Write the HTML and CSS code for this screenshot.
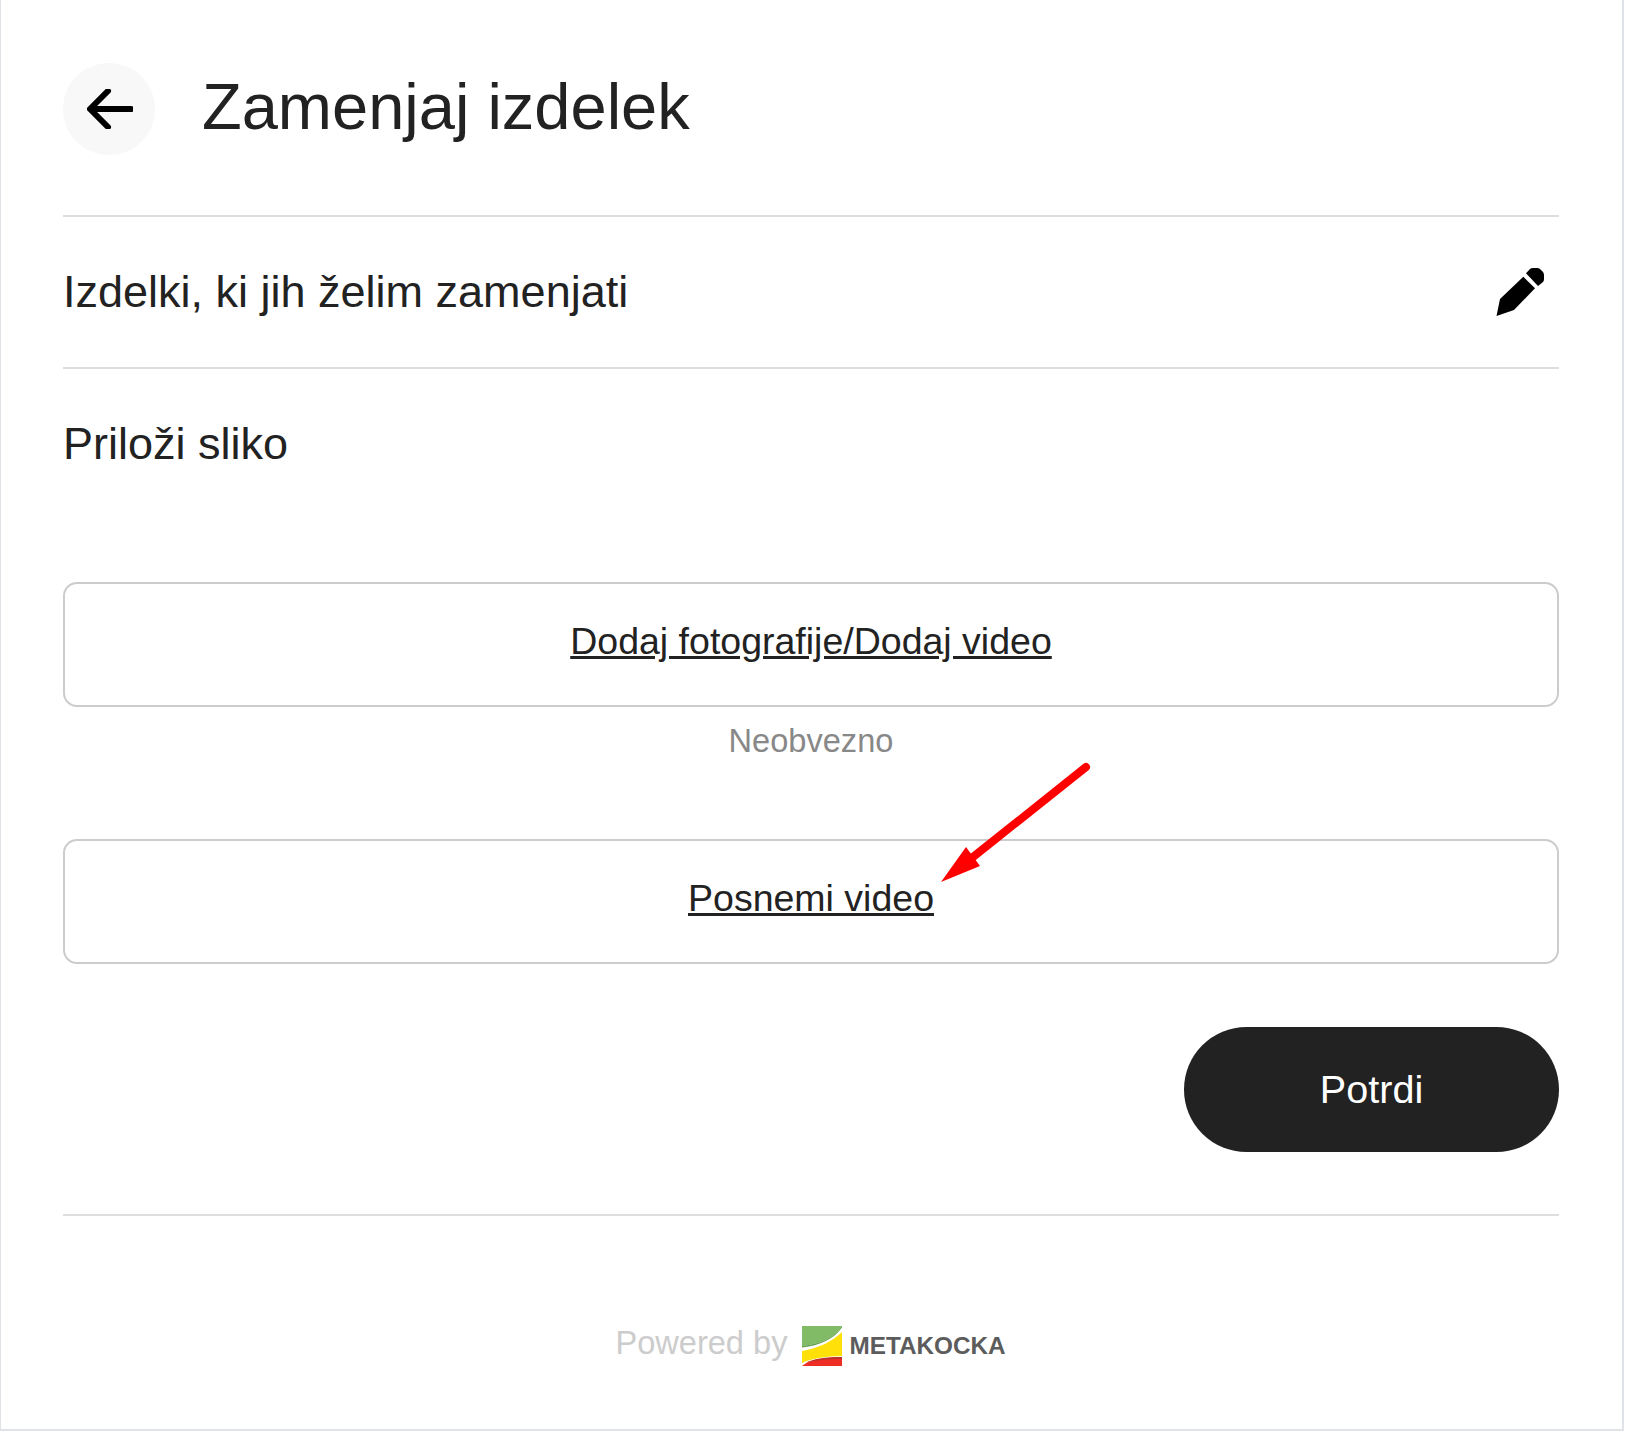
FILE: index.html
```html
<!DOCTYPE html>
<html lang="sl">
<head>
<meta charset="utf-8">
<title>Zamenjaj izdelek</title>
<link rel="stylesheet" href="styles.css">
</head>
<body>
<main class="frame">
  <header class="head">
    <a class="back" href="#" aria-label="Nazaj">
      <svg class="back-icon" viewBox="0 0 46 40" aria-hidden="true"><path d="M44 20H4M21 2 3 20l18 18"/></svg>
    </a>
    <h1 class="title">Zamenjaj izdelek</h1>
  </header>
  <section class="row">
    <h2 class="label">Izdelki, ki jih želim zamenjati</h2>
    <svg class="pencil" viewBox="0 0 48 48" aria-hidden="true">
      <path d="M0.5 48 4 31 27.3 8.7 39 20.3 18 42Z"/>
      <path d="M30 5.3 34 1Q35 0 37 0H41Q43 0 44 1L47 4Q48 5.5 48 7V11Q48 13 47 14L42 18Z"/>
    </svg>
  </section>
  <section class="attach">
    <h2 class="label">Priloži sliko</h2>
    <div class="drop drop-first"><a class="drop-link" href="#">Dodaj fotografije/Dodaj video</a></div>
    <p class="hint">Neobvezno</p>
    <div class="drop drop-second"><a class="drop-link" href="#">Posnemi video</a></div>
    <div class="actions"><button class="confirm" type="button">Potrdi</button></div>
  </section>
  <footer class="foot">
    <span class="powered">Powered by</span>
    <svg class="mark" viewBox="0 0 40 40" aria-hidden="true">
      <path fill="#82bb65" d="M0 0H40C32 12 18 18 0 20Z"/>
      <path fill="#5f9e4a" d="M0 20C18 18 32 12 40 0V1.500C32 13 18 19.500 0 21.500Z"/>
      <path fill="#ffe008" d="M0 25C16 22 30 16 40 6V30C24 30 8 33 0 37Z"/>
      <path fill="#ee2e24" d="M0 40C6 34 24 31 40 31V40Z"/>
      <path fill="#b9312b" d="M3.500 37C10 33 24 31 40 31V33C24 33 12 34.500 3.500 37Z"/>
    </svg>
    <span class="brand">METAKOCKA</span>
  </footer>
  <svg class="annotation" viewBox="0 0 160 130" aria-hidden="true">
    <path class="annotation-line" d="M152 15 34 109"/>
    <path class="annotation-head" d="M7 130 32 95 46 114Z"/>
  </svg>
</main>
</body>
</html>
```
FILE: styles.css
```css
* { box-sizing: border-box; }
html, body { margin: 0; padding: 0; background: #fff; }
body { font-family: "Liberation Sans", Arial, sans-serif; color: #222; }

.frame {
  position: relative;
  width: 1624px;
  height: 1431px;
  padding: 0 63px 0 62px;
  border-left: 1px solid #dfe3e8;
  border-right: 2px solid #dfe3e8;
  border-bottom: 2px solid #dfe3e8;
}

.head {
  display: flex;
  align-items: center;
  gap: 47px;
  height: 217px;
  padding: 63px 0 60px;
  border-bottom: 2px solid #ddd;
}
.back {
  display: flex;
  align-items: center;
  justify-content: center;
  width: 92px;
  height: 92px;
  border-radius: 50%;
  background: #f8f8f8;
}
.back-icon {
  width: 46px;
  height: 40px;
  margin-left: 2px;
  fill: none;
  stroke: #000;
  stroke-width: 6;
  stroke-linecap: round;
  stroke-linejoin: round;
}
.title { margin: -4px 0 0; font-size: 65px; font-weight: 400; line-height: 74px; }

.row {
  display: flex;
  align-items: center;
  justify-content: space-between;
  height: 152px;
  padding-right: 15px;
  border-bottom: 2px solid #ddd;
}
.label { margin: 0; font-size: 45px; font-weight: 400; line-height: 50px; }
.pencil { width: 48px; height: 48px; fill: #000; }

.attach { padding-top: 50px; }
.drop {
  display: flex;
  justify-content: center;
  height: 125px;
  padding-top: 35px;
  border: 2px solid #ccc;
  border-radius: 14px;
}
.drop-first { margin-top: 113px; }
.drop-second { margin-top: 79px; }
.drop-link { color: #222; font-size: 37.5px; line-height: 44px; text-decoration: underline; }
.hint { margin: 15px 0 0; color: #888; font-size: 32.6px; line-height: 38px; text-align: center; }

.actions { display: flex; justify-content: flex-end; margin-top: 63px; }
.confirm {
  width: 375px;
  height: 125px;
  padding: 0 0 2px;
  border: 0;
  border-radius: 63px;
  background: #222;
  color: #fff;
  font: 400 39.6px/44px "Liberation Sans", Arial, sans-serif;
}

.foot {
  display: flex;
  align-items: flex-start;
  justify-content: center;
  margin-top: 62px;
  padding: 108px 1px 0 0;
  border-top: 2px solid #ddd;
}
.powered { color: #ccc; font-size: 32.6px; line-height: 38px; margin-right: 15px; }
.mark { width: 40px; height: 40px; margin-top: 2px; }
.brand { margin: 7px 0 0 7px; color: #5c5c5c; font-size: 24.3px; font-weight: 700; line-height: 30px; }

.annotation { position: absolute; left: 933px; top: 752px; width: 160px; height: 130px; }
.annotation-line { fill: none; stroke: #f00; stroke-width: 8; stroke-linecap: round; }
.annotation-head { fill: #f00; }
```
